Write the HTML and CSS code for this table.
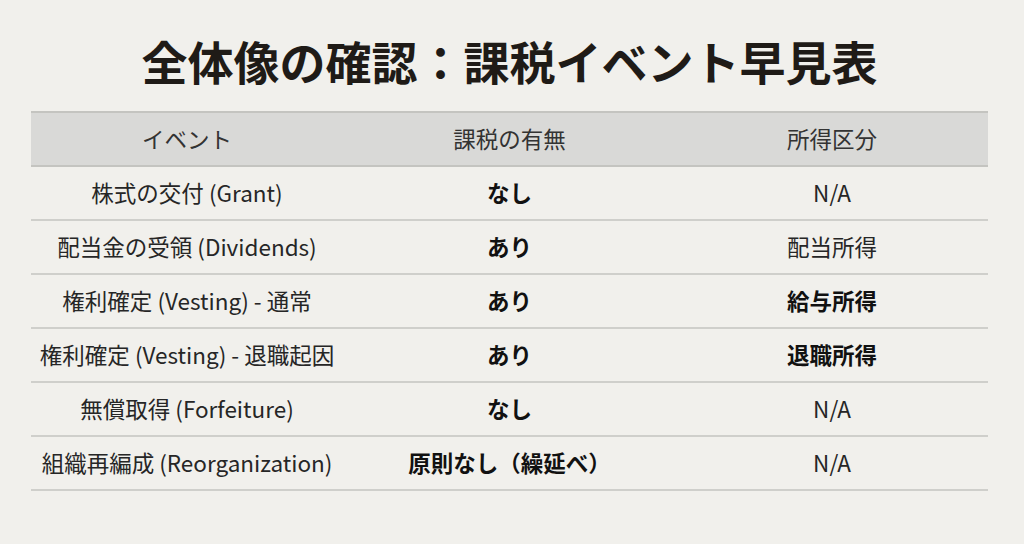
FILE: index.html
```html
<!DOCTYPE html>
<html lang="ja">
<head>
<meta charset="utf-8">
<link rel="stylesheet" href="styles.css">
</head>
<body>
<main class="slide">
  <h1 class="title">全体像の確認：課税イベント早見表</h1>
  <table class="tbl">
    <colgroup><col class="c1"><col class="c2"><col class="c3"></colgroup>
    <thead>
      <tr><th>イベント</th><th>課税の有無</th><th>所得区分</th></tr>
    </thead>
    <tbody>
      <tr><td>株式の交付 (Grant)</td><td class="b">なし</td><td>N/A</td></tr>
      <tr><td>配当金の受領 (Dividends)</td><td class="b">あり</td><td>配当所得</td></tr>
      <tr><td>権利確定 (Vesting) - 通常</td><td class="b">あり</td><td class="b">給与所得</td></tr>
      <tr><td>権利確定 (Vesting) - 退職起因</td><td class="b">あり</td><td class="b">退職所得</td></tr>
      <tr><td>無償取得 (Forfeiture)</td><td class="b">なし</td><td>N/A</td></tr>
      <tr><td>組織再編成 (Reorganization)</td><td class="b">原則なし（繰延べ）</td><td>N/A</td></tr>
    </tbody>
  </table>
</main>
</body>
</html>
```
FILE: styles.css
```css
html, body {
  margin: 0;
  padding: 0;
  background: #f1f0ec;
}
body {
  font-family: "Noto Sans CJK JP", "Noto Sans", sans-serif;
  color: #222;
  width: 1024px;
  height: 544px;
  overflow: hidden;
}
.slide {
  padding: 27px 36px 0 31px;
  display: flex;
  flex-direction: column;
  align-items: center;
}
.title {
  margin: 0;
  font-size: 46px;
  font-weight: 700;
  line-height: 66px;
  color: #1f1b17;
  letter-spacing: 0;
}
.tbl {
  margin-top: 18px;
  width: 957px;
  border-collapse: collapse;
  table-layout: fixed;
  font-size: 22.5px;
}
.c1, .c3 { width: 312px; }
.c2 { width: 333px; }
.tbl th, .tbl td {
  text-align: center;
  height: 49px;
  padding: 0 0 3px;
  border-bottom: 2px solid #cfcfcb;
  font-weight: 400;
  white-space: nowrap;
}
.tbl th {
  background: #d9d9d7;
  border-top: 2px solid #c4c4c0;
  border-bottom: 2px solid #c4c4c0;
  color: #333;
}
.tbl td {
  color: #262626;
}
.tbl td.b {
  font-weight: 700;
  color: #111;
}
```
